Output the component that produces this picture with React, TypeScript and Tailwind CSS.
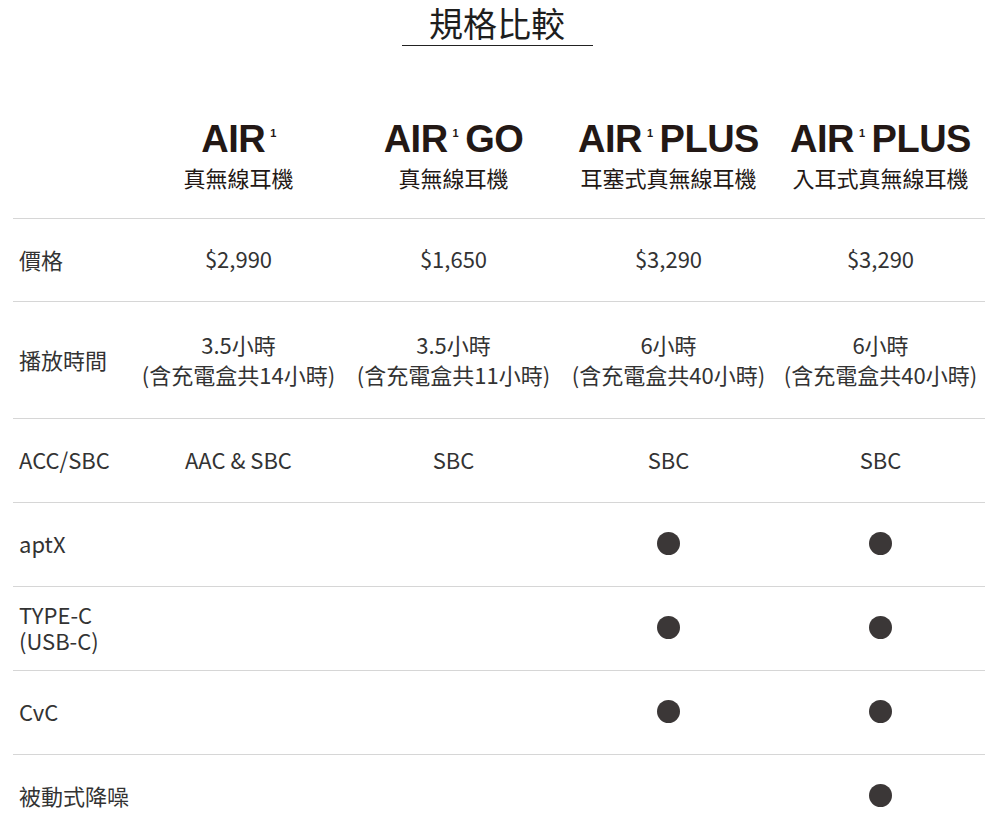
import React from "react";

type Cell = string | boolean | [string, string];

const MODELS = [
  { name: "AIR", suffix: "", sub: "真無線耳機" },
  { name: "AIR", suffix: "GO", sub: "真無線耳機" },
  { name: "AIR", suffix: "PLUS", sub: "耳塞式真無線耳機" },
  { name: "AIR", suffix: "PLUS", sub: "入耳式真無線耳機" },
];

const ROWS: { label: string[]; h: string; cells: Cell[] }[] = [
  { label: ["價格"], h: "h-[83px]", cells: ["$2,990", "$1,650", "$3,290", "$3,290"] },
  {
    label: ["播放時間"],
    h: "h-[117px]",
    cells: [
      ["3.5小時", "(含充電盒共14小時)"],
      ["3.5小時", "(含充電盒共11小時)"],
      ["6小時", "(含充電盒共40小時)"],
      ["6小時", "(含充電盒共40小時)"],
    ],
  },
  { label: ["ACC/SBC"], h: "h-[84px]", cells: ["AAC & SBC", "SBC", "SBC", "SBC"] },
  { label: ["aptX"], h: "h-[84px]", cells: [false, false, true, true] },
  { label: ["TYPE-C", "(USB-C)"], h: "h-[84px]", cells: [false, false, true, true] },
  { label: ["CvC"], h: "h-[84px]", cells: [false, false, true, true] },
  { label: ["被動式降噪"], h: "h-[84px]", cells: [false, false, false, true] },
];

function Value({ cell }: { cell: Cell }) {
  if (cell === true) {
    return <span className="block w-[23px] h-[23px] rounded-full bg-[#3b3737]" />;
  }
  if (cell === false) return null;
  if (Array.isArray(cell)) {
    return (
      <div className="text-center leading-[30px] whitespace-nowrap">
        <div>{cell[0]}</div>
        <div>{cell[1]}</div>
      </div>
    );
  }
  return <span className="whitespace-nowrap">{cell}</span>;
}

export default function App() {
  return (
    <div
      className="w-full bg-white text-[#333] pb-10"
      style={{ fontFamily: '"Noto Sans CJK TC", "Noto Sans", sans-serif' }}
    >
      <div className="flex flex-col items-center pr-[6px]">
        <h2 className="text-[34px] leading-[45px] text-[#1e1e1e] font-normal">規格比較</h2>
        <div className="w-[191px] h-px bg-[#222]" />
      </div>

      <div className="ml-[13px] w-[972px]">
        <div className="grid grid-cols-[118px_215px_215px_215px_1fr] border-b border-[#d6d6d6] pt-[74px] pb-[30px]">
          <div />
          {MODELS.map((m, i) => (
            <div key={i} className="flex flex-col items-center text-[#231815]">
              <div
                className="flex items-start text-[38px] leading-[38px] font-bold tracking-[-0.5px] whitespace-nowrap"
                style={{ fontFamily: '"Liberation Sans", Arial, sans-serif' }}
              >
                <span>{m.name}</span>
                <span className={`text-[11px] leading-none mt-[8px] ml-[5px] ${m.suffix ? "mr-[7px]" : ""}`}>1</span>
                {m.suffix && <span>{m.suffix}</span>}
              </div>
              <div className="mt-[8px] text-[22px] leading-[22px] whitespace-nowrap">{m.sub}</div>
            </div>
          ))}
        </div>

        {ROWS.map((row, ri) => (
          <div
            key={ri}
            className={`grid grid-cols-[118px_215px_215px_215px_1fr] items-center border-b border-[#d6d6d6] text-[22px] pb-[3px] ${row.h}`}
          >
            <div className="pl-[6px] leading-[26px]">
              {row.label.map((l, li) => (
                <div key={li}>{l}</div>
              ))}
            </div>
            {row.cells.map((c, ci) => (
              <div key={ci} className="flex justify-center items-center">
                <Value cell={c} />
              </div>
            ))}
          </div>
        ))}
      </div>
    </div>
  );
}
